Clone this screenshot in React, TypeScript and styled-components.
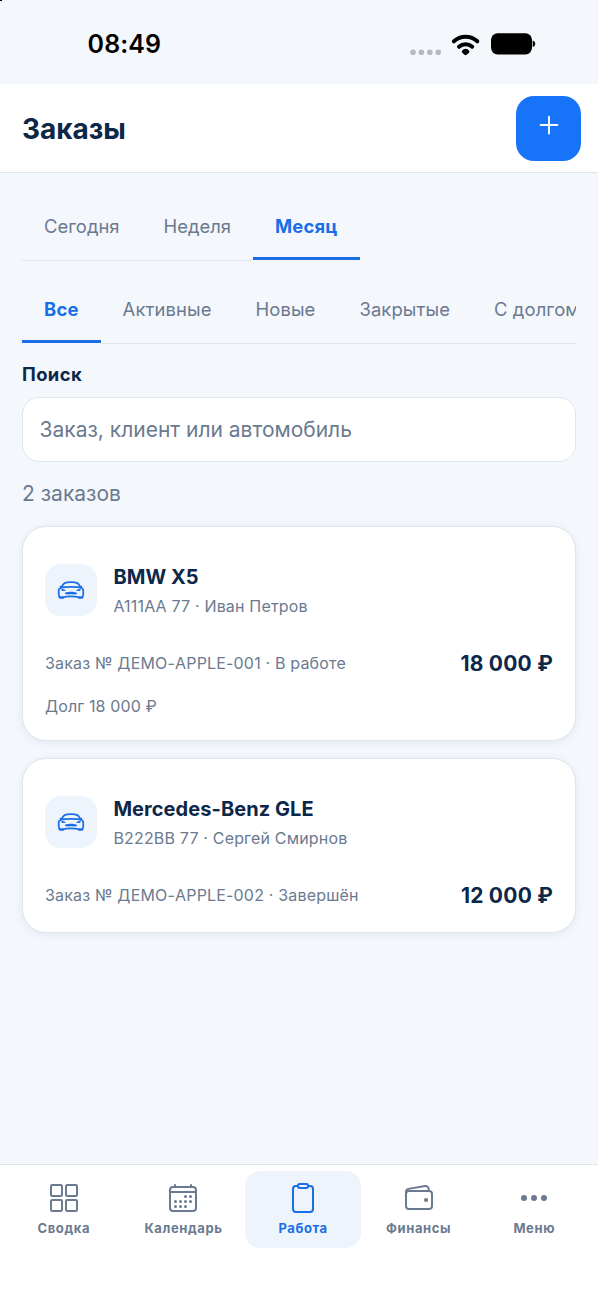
import React from "react";
import styled, { createGlobalStyle } from "styled-components";
import type { IconType } from "react-icons";
import {
  IoAdd,
  IoCalendarOutline,
  IoCarSportOutline,
  IoClipboardOutline,
  IoEllipsisHorizontal,
  IoGridOutline,
  IoWalletOutline,
} from "react-icons/io5";

const color = {
  page: "#f4f7fc",
  surface: "#ffffff",
  line: "#dfe5ed",
  text: "#0d2748",
  muted: "#6b7a90",
  accent: "#1a6fe8",
  button: "#1774f8",
  tint: "#edf4fc",
};

const GlobalStyle = createGlobalStyle`
  * { box-sizing: border-box; }
  body {
    margin: 0;
    background: ${color.page};
    color: ${color.text};
    font-family: Inter, "Liberation Sans", sans-serif;
    overflow: hidden;
  }
`;

const Screen = styled.div`
  display: flex;
  flex-direction: column;
  width: 598px;
  height: 1300px;
  background: ${color.page};
`;

const Corner = styled.span`
  position: absolute;
  top: 0;
  left: 0;
  width: 2px;
  height: 1px;
  background: #000;
`;

const StatusBar = styled.div`
  display: flex;
  align-items: center;
  justify-content: space-between;
  height: 84px;
  padding: 4px 62px 0 87.6px;
`;

const Clock = styled.time`
  color: #000;
  font-size: 25px;
  font-weight: 600;
  letter-spacing: 0.1px;
  line-height: 30px;
`;

const StatusIcons = styled.svg`
  display: block;
  width: 126px;
  height: 24px;
`;

const Header = styled.header`
  display: flex;
  align-items: center;
  justify-content: space-between;
  height: 89px;
  padding: 0 17px 0 22px;
  background: ${color.surface};
  border-bottom: 1px solid ${color.line};
`;

const Title = styled.h1`
  margin: 1px 0 0;
  font-size: 28px;
  font-weight: 700;
  letter-spacing: -0.05px;
  line-height: 34px;
`;

const AddButton = styled.button`
  display: flex;
  align-items: center;
  justify-content: center;
  width: 65px;
  height: 65px;
  padding: 0 0 7px;
  border: 0;
  border-radius: 18px;
  background: ${color.button};
  color: #fff;
  font-size: 30px;
`;

const Content = styled.main`
  display: flex;
  flex-direction: column;
  flex: 1;
  padding: 18px 22px 0;
`;

const TabRow = styled.div<{ $tracking: string }>`
  display: flex;
  height: 70px;
  margin-bottom: 13px;
  overflow: hidden;
  letter-spacing: ${(p) => p.$tracking};
`;

const Tab = styled.button<{ $active?: boolean }>`
  flex: none;
  padding: 1px 22px 0;
  border: 0;
  border-bottom: 1px solid ${(p) => (p.$active ? "transparent" : color.line)};
  box-shadow: ${(p) => (p.$active ? `inset 0 -3px ${color.accent}` : "none")};
  background: none;
  color: ${(p) => (p.$active ? color.accent : color.muted)};
  font-family: inherit;
  font-size: 18.4px;
  font-weight: ${(p) => (p.$active ? 700 : 400)};
  letter-spacing: ${(p) => (p.$active ? "0.22px" : "inherit")};
  white-space: nowrap;
`;

const SearchLabel = styled.label`
  margin-top: 4px;
  font-size: 18.4px;
  font-weight: 700;
  letter-spacing: 0.4px;
  line-height: 26px;
`;

const SearchInput = styled.input`
  height: 65px;
  margin-top: 10px;
  padding: 0 16.5px;
  border: 1px solid ${color.line};
  border-radius: 17px;
  background: ${color.surface};
  color: ${color.text};
  font-family: inherit;
  font-size: 21px;
  outline: none;

  &::placeholder {
    color: ${color.muted};
    opacity: 1;
  }
`;

const Count = styled.p`
  margin: 17px 0;
  color: ${color.muted};
  font-size: 21px;
  line-height: 30px;
`;

const CardList = styled.div`
  display: flex;
  flex-direction: column;
  gap: 17px;
`;

const Card = styled.article`
  padding: 35px 22px 22px;
  border: 1px solid ${color.line};
  border-radius: 24px;
  background: ${color.surface};
  box-shadow: 0 2px 8px rgba(20, 45, 85, 0.07);
`;

const CardHead = styled.div`
  display: flex;
  gap: 16.4px;
  height: 58px;
`;

const CarBadge = styled.span`
  display: flex;
  align-items: center;
  justify-content: center;
  width: 52px;
  height: 52px;
  margin-top: 2px;
  border-radius: 16px;
  background: ${color.tint};
  color: ${color.accent};
  font-size: 28px;
`;

const CarName = styled.h2`
  margin: 0;
  font-size: 20px;
  font-weight: 700;
  letter-spacing: 0.06px;
  line-height: 30px;
`;

const Note = styled.p`
  margin: 0;
  color: ${color.muted};
  font-size: 16px;
  letter-spacing: 0.18px;
  line-height: 29px;
`;

const OrderRow = styled.div`
  display: flex;
  align-items: center;
  justify-content: space-between;
  height: 30px;
  margin-top: 28px;
`;

const Price = styled.strong`
  font-size: 21px;
  font-weight: 700;
  letter-spacing: 0.22px;
`;

const Debt = styled(Note)`
  margin-top: 16px;
  line-height: 24px;
  letter-spacing: 0.12px;
`;

const TabBar = styled.nav`
  display: flex;
  align-items: flex-start;
  height: 136px;
  padding: 6px 6px 0;
  border-top: 1px solid ${color.line};
  background: ${color.surface};
`;

const NavItem = styled.a<{ $active?: boolean }>`
  display: flex;
  flex: 1 1 0;
  flex-direction: column;
  align-items: center;
  gap: 6px;
  height: 77px;
  padding: 11px 22.8px 0;
  border-radius: 15px;
  background: ${(p) => (p.$active ? color.tint : "transparent")};
  color: ${(p) => (p.$active ? color.accent : color.muted)};

  svg {
    width: 32px;
    height: 32px;
  }
`;

const NavLabel = styled.span`
  font-size: 13px;
  font-weight: 700;
  letter-spacing: 0.6px;
  line-height: 16px;
`;

type Order = {
  car: string;
  owner: string;
  order: string;
  price: string;
  debt?: string;
};

const orders: Order[] = [
  {
    car: "BMW X5",
    owner: "А111АА 77 · Иван Петров",
    order: "Заказ № ДЕМО-APPLE-001 · В работе",
    price: "18 000 ₽",
    debt: "Долг 18 000 ₽",
  },
  {
    car: "Mercedes-Benz GLE",
    owner: "В222ВВ 77 · Сергей Смирнов",
    order: "Заказ № ДЕМО-APPLE-002 · Завершён",
    price: "12 000 ₽",
  },
];

const navItems: { label: string; icon: IconType }[] = [
  { label: "Сводка", icon: IoGridOutline },
  { label: "Календарь", icon: IoCalendarOutline },
  { label: "Работа", icon: IoClipboardOutline },
  { label: "Финансы", icon: IoWalletOutline },
  { label: "Меню", icon: IoEllipsisHorizontal },
];

type TabsProps = { items: string[]; active: string; tracking: string };

function Tabs({ items, active, tracking }: TabsProps) {
  return (
    <TabRow $tracking={tracking}>
      {items.map((item) => (
        <Tab key={item} $active={item === active}>
          {item}
        </Tab>
      ))}
    </TabRow>
  );
}

function DeviceStatus() {
  return (
    <StatusIcons viewBox="0 0 126 24">
      <g fill="#b4b8bf">
        <circle cx="3" cy="20.3" r="2.8" />
        <circle cx="11.4" cy="20.3" r="2.8" />
        <circle cx="19.8" cy="20.3" r="2.8" />
        <circle cx="28.2" cy="20.3" r="2.8" />
      </g>
      <g fill="none" stroke="#000" strokeWidth="4" strokeLinecap="round">
        <path d="M43.9 9.3a17 17 0 0 1 23.4 0" />
        <path d="M49 14.8a10 10 0 0 1 13.2 0" />
      </g>
      <path d="M52 19c1.8-3 5.4-3 7.2 0c.4.7.2 1.2-.3 1.7l-2.2 2c-.7.6-1.5.6-2.2 0l-2.2-2c-.5-.5-.7-1-.3-1.7z" />
      <rect x="81" y="1.2" width="41" height="21.2" rx="6.6" />
      <path d="M122.7 8.6c3.4 1 3.4 5.4 0 6.4z" />
    </StatusIcons>
  );
}

function OrderCard({ car, owner, order, price, debt }: Order) {
  return (
    <Card>
      <CardHead>
        <CarBadge>
          <IoCarSportOutline />
        </CarBadge>
        <div>
          <CarName>{car}</CarName>
          <Note>{owner}</Note>
        </div>
      </CardHead>
      <OrderRow>
        <Note>{order}</Note>
        <Price>{price}</Price>
      </OrderRow>
      {debt && <Debt>{debt}</Debt>}
    </Card>
  );
}

export default function App() {
  return (
    <Screen>
      <GlobalStyle />
      <Corner />
      <StatusBar>
        <Clock>08:49</Clock>
        <DeviceStatus />
      </StatusBar>
      <Header>
        <Title>Заказы</Title>
        <AddButton aria-label="Добавить">
          <IoAdd />
        </AddButton>
      </Header>
      <Content>
        <Tabs items={["Сегодня", "Неделя", "Месяц"]} active="Месяц" tracking="0px" />
        <Tabs
          items={["Все", "Активные", "Новые", "Закрытые", "С долгом"]}
          active="Все"
          tracking="0.12px"
        />
        <SearchLabel htmlFor="search">Поиск</SearchLabel>
        <SearchInput id="search" placeholder="Заказ, клиент или автомобиль" />
        <Count>2 заказов</Count>
        <CardList>
          {orders.map((order) => (
            <OrderCard key={order.car} {...order} />
          ))}
        </CardList>
      </Content>
      <TabBar>
        {navItems.map(({ label, icon: Icon }) => (
          <NavItem key={label} $active={label === "Работа"}>
            <Icon />
            <NavLabel>{label}</NavLabel>
          </NavItem>
        ))}
      </TabBar>
    </Screen>
  );
}
